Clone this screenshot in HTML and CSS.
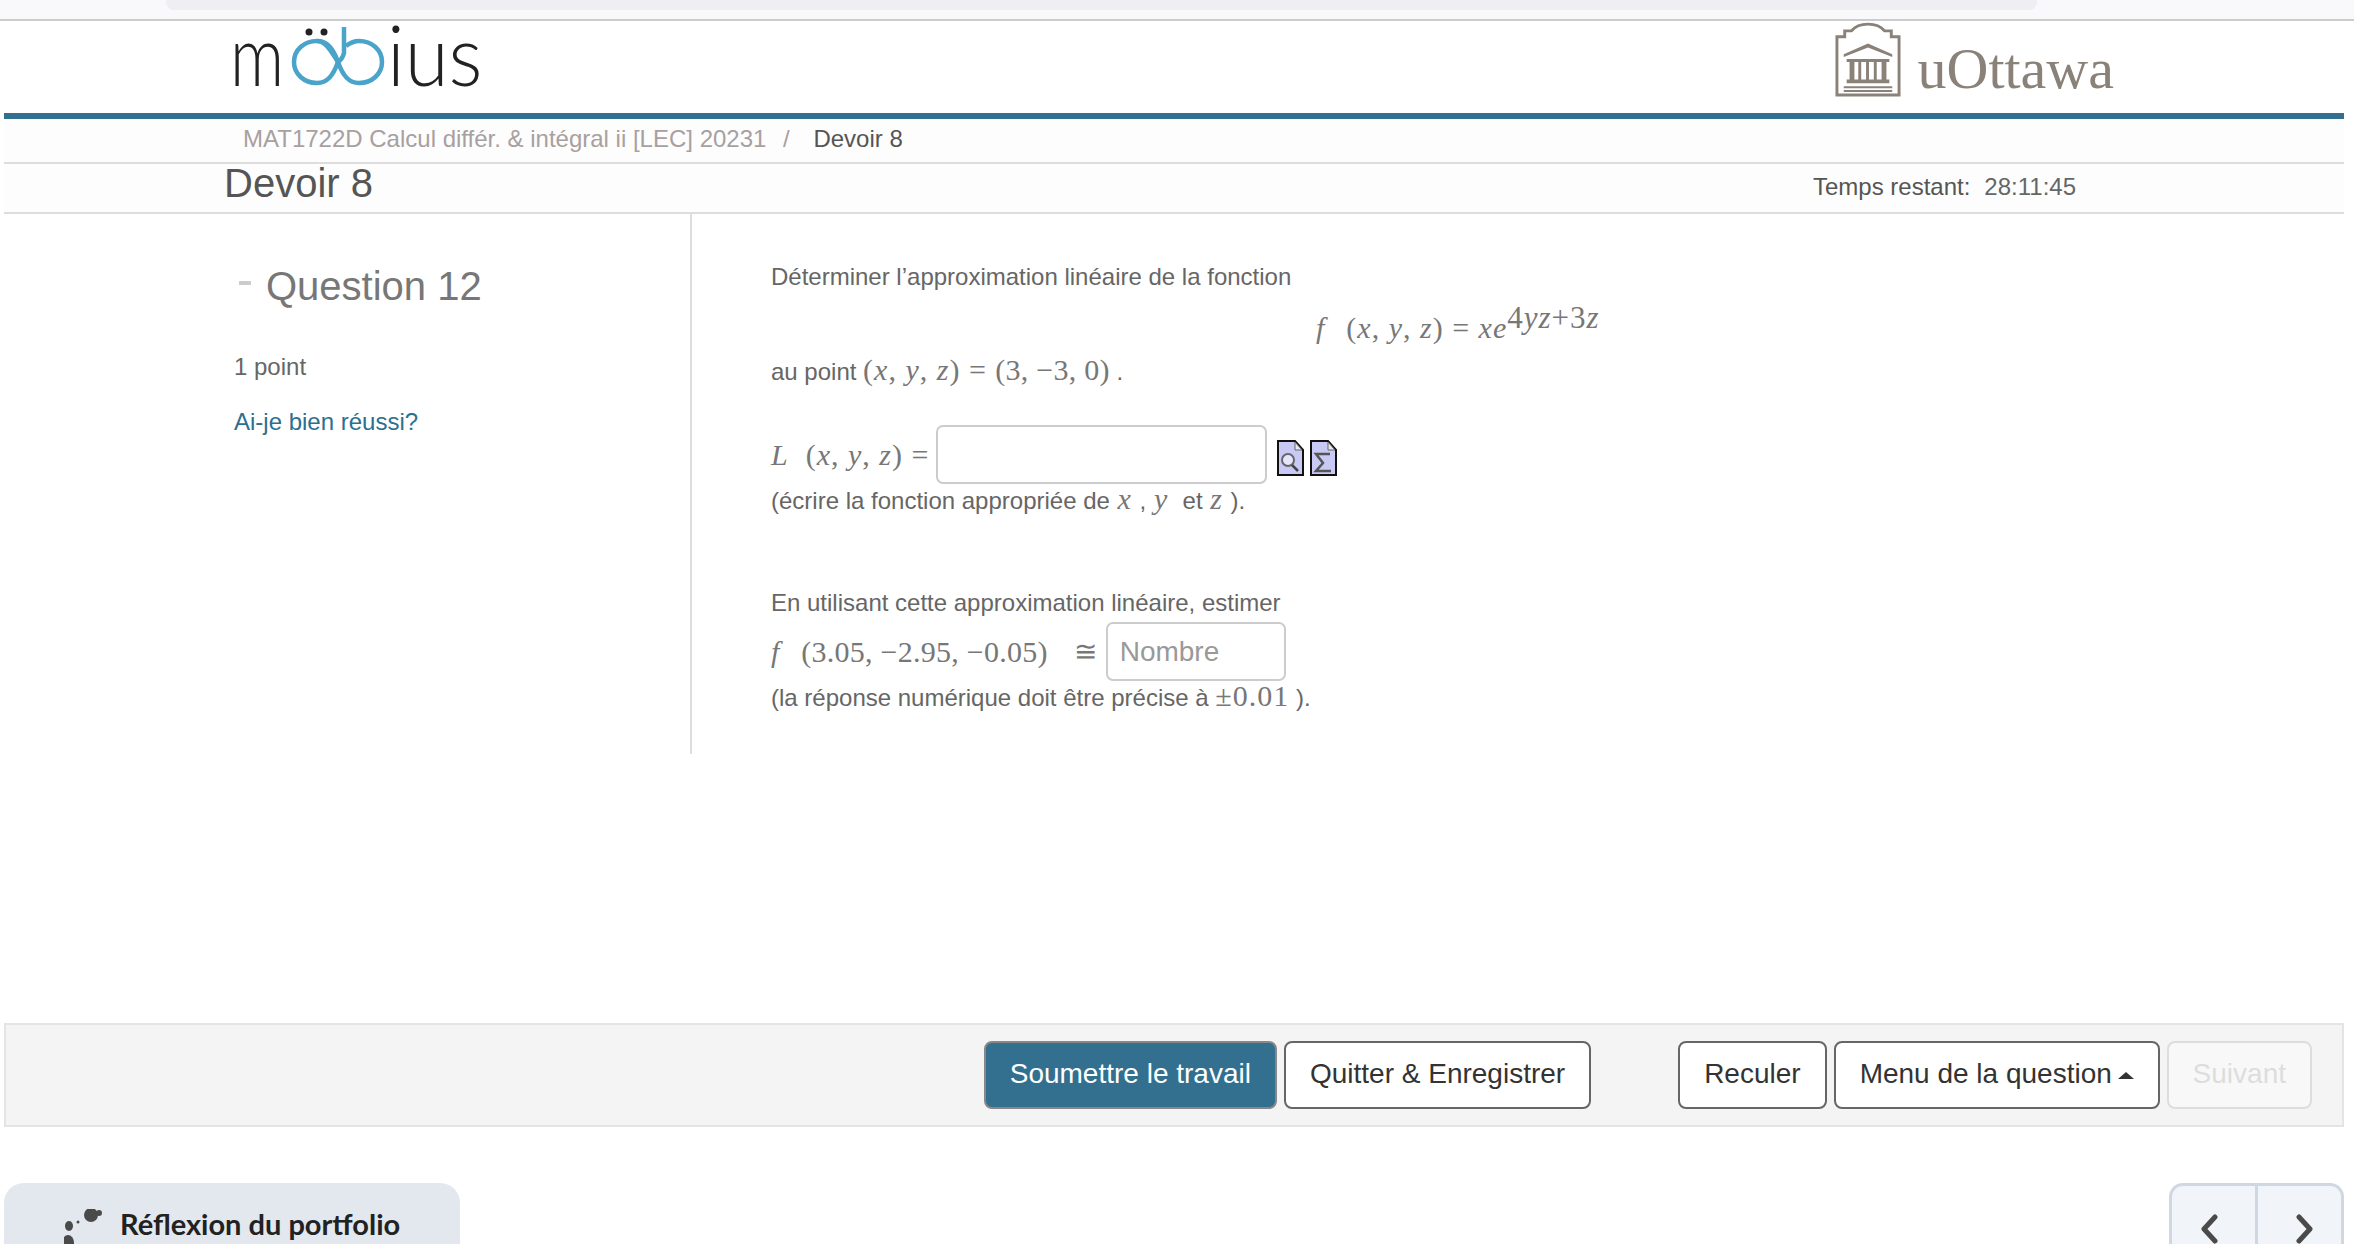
FILE: index.html
```html
<!DOCTYPE html>
<html lang="fr">
<head>
	<meta charset="UTF-8">
	<title>Devoir 8</title>
	<link rel="stylesheet" href="styles.css">
</head>
<body>
	<div class="chrome"><div class="chrome_pill"></div></div>

	<div class="page">
		<div class="header">
			<div class="logo_mobius">
				<span class="logo_m">m</span>
				<svg class="logo_loop" width="98" height="62" viewBox="0 0 98 62">
					<path d="M27 58c-13 0-23-9-23-21s10-21 23-21c10 0 16 7 21 21s11 21 21 21c13 0 23-9 23-21s-10-21-23-21c-5 0-9 2-13 5M48 37c-5 14-11 21-21 21" fill="none" stroke="#4aa3c8" stroke-width="4.5"/>
					<path d="M48 37C40 24 35 16 27 16" fill="none" stroke="#4aa3c8" stroke-width="4.5"/>
					<path d="M54 2v26c-1 4-3 7-6 9" fill="none" stroke="#4aa3c8" stroke-width="4.5"/>
					<circle cx="19" cy="7" r="3.5" fill="#222"/>
					<circle cx="34" cy="7" r="3.5" fill="#222"/>
				</svg>
				<span class="logo_ius">ius</span>
			</div>
			<div class="logo_ottawa">
				<svg width="66" height="78" viewBox="0 0 68 78">
					<path d="M2 75V15h8V9h7C21 4 27 2 34 2s13 2 17 7h7v6h8v60z" fill="none" stroke="#8a8178" stroke-width="3"/>
					<path d="M9 33l25-11 25 11v3L34 26 9 36z" fill="#8a8178"/>
					<path d="M12 38h44v3H12zM15 41h5v18h-5zM24 41h3v18h-3zM32 41h3v18h-3zM40 41h3v18h-3zM48 41h5v18h-5zM12 59h44v4H12zM9 66h50v2H9zM9 70h50v2H9z" fill="#8a8178"/>
				</svg>
				<span class="logo_ottawa_txt">uOttawa</span>
			</div>
		</div>

		<div class="breadcrumb">
			<span class="crumb_course">MAT1722D Calcul différ. &amp; intégral ii [LEC] 20231</span>
			<span class="crumb_sep">/</span>
			<span class="crumb_cur">Devoir 8</span>
		</div>

		<div class="titlebar">
			<h1 class="title">Devoir 8</h1>
			<div class="timer"><span>Temps restant:</span><span class="timer_val">28:11:45</span></div>
		</div>

		<div class="content">
			<div class="side">
				<h2 class="q_title"><span class="q_dash"></span>Question 12</h2>
				<p class="q_points">1 point</p>
				<a class="q_link" href="#">Ai-je bien réussi?</a>
			</div>
			<div class="question">
				<p class="line_intro">Déterminer l’approximation linéaire de la fonction</p>
				<p class="line_formula"><span class="math"><i class="fn">f</i> &nbsp;(<i>x</i>, <i>y</i>, <i>z</i>) = <i>xe</i><sup>4<i>yz</i>+3<i>z</i></sup></span></p>
				<p class="line_point">au point <span class="math">(<i>x</i>, <i>y</i>, <i>z</i>) = <span class="math_num">(3, −3, 0)</span></span> .</p>
				<div class="line_answer">
					<span class="math"><i>L</i> &nbsp;(<i>x</i>, <i>y</i>, <i>z</i>) =</span>
					<input type="text" class="ans_input ans_wide">
					<svg class="ans_icon" width="27" height="36" viewBox="0 0 27 36">
						<path d="M1 1h17l8 9v25H1z" fill="#c9c9f5" stroke="#111" stroke-width="2"/>
						<path d="M18 2v8h7z" fill="#e8e8f0" stroke="#666"/>
						<circle cx="11" cy="20" r="6" fill="#e6e6fa" stroke="#666" stroke-width="2"/>
						<path d="M15 25l6 6" stroke="#444" stroke-width="2.5"/>
					</svg>
					<svg class="ans_icon" width="27" height="36" viewBox="0 0 27 36">
						<path d="M1 1h17l8 9v25H1z" fill="#c9c9f5" stroke="#111" stroke-width="2"/>
						<path d="M18 2v8h7z" fill="#e8e8f0" stroke="#666"/>
						<path d="M20 14H6l7 9-7 8h15" fill="none" stroke="#555" stroke-width="2.5"/>
					</svg>
				</div>
				<p class="line_note">(écrire la fonction appropriée de <span class="math"><i>x</i></span> , <span class="math"><i>y</i></span> &nbsp;et <span class="math"><i>z</i></span> ).</p>
				<p class="line_estim">En utilisant cette approximation linéaire, estimer</p>
				<div class="line_answer2">
					<span class="math"><i class="fn">f</i> &nbsp;<span class="math_num">(3.05, −2.95, −0.05)</span></span>
					<span class="math approx">≅</span>
					<input type="text" class="ans_input ans_num" placeholder="Nombre">
				</div>
				<p class="line_note2">(la réponse numérique doit être précise à <span class="math">±0.01</span> ).</p>
			</div>
		</div>

		<div class="actions">
			<button class="btn btn_main">Soumettre le travail</button>
			<button class="btn">Quitter &amp; Enregistrer</button>
			<button class="btn btn_back">Reculer</button>
			<button class="btn">Menu de la question <span class="caret"></span></button>
			<button class="btn btn_off">Suivant</button>
		</div>

		<div class="bottom">
			<div class="folio">
				<svg width="38" height="40" viewBox="0 0 38 40">
					<circle cx="27" cy="6" r="7" fill="#4a4a4a"/>
					<circle cx="35" cy="4" r="3" fill="#4a4a4a"/>
					<circle cx="14" cy="13" r="1.5" fill="#4a4a4a"/>
					<ellipse cx="5" cy="17" rx="4" ry="5" fill="#4a4a4a"/>
					<ellipse cx="4" cy="34" rx="6" ry="8" fill="#4a4a4a"/>
				</svg>
				<span>Réflexion du portfolio</span>
			</div>
			<div class="pager">
				<div class="pager_btn">
					<svg width="20" height="30" viewBox="0 0 20 30"><path d="M16 3L5 15l11 12" fill="none" stroke="#4a4a4a" stroke-width="5" stroke-linecap="round" stroke-linejoin="round"/></svg>
				</div>
				<div class="pager_btn pager_next">
					<svg width="20" height="30" viewBox="0 0 20 30"><path d="M4 3l11 12L4 27" fill="none" stroke="#4a4a4a" stroke-width="5" stroke-linecap="round" stroke-linejoin="round"/></svg>
				</div>
			</div>
		</div>
	</div>
</body>
</html>
```

FILE: styles.css
```css
html, body
{
	margin: 0;
	height: 1244px;
	overflow: hidden;
	background-color: #fff;
	font-family: "Liberation Sans", Arial, sans-serif;
	font-size: 24px;
	color: #666;
}
p, h1, h2
{
	margin: 0;
	font-weight: normal;
}
.chrome
{
	height: 19px;
	background-color: #f9f9fb;
	border-bottom: 2px solid #ccc;
	padding: 0 317px 0 166px;
}
.chrome_pill
{
	height: 10px;
	background-color: #eeeef3;
	border-radius: 0 0 8px 8px;
}
.page
{
	margin: 0 10px 0 4px;
}
.header
{
	height: 92px;
	display: flex;
	justify-content: space-between;
	border-bottom: 6px solid #33708f;
}
.logo_mobius
{
	display: flex;
	align-items: flex-end;
	height: 66px;
	padding-left: 226px;
	font-family: Lato, sans-serif;
	font-weight: 300;
	font-size: 84px;
	line-height: 66px;
	color: #222;
}
.logo_m, .logo_ius
{
	display: inline-block;
	transform-origin: left;
}
.logo_m
{
	transform: scaleX(.8);
	margin-right: -8px;
}
.logo_ius
{
	transform: scaleX(.95);
	margin: 0 -5px 0 -1px;
}
.logo_ottawa
{
	display: flex;
	padding-right: 230px;
	gap: 17px;
}
.logo_ottawa_txt
{
	font-family: "Liberation Serif", serif;
	font-size: 58px;
	line-height: 96px;
	color: #8a8178;
}
.breadcrumb
{
	height: 43px;
	line-height: 40px;
	padding-left: 239px;
	background-color: #fdfdfd;
	border-bottom: 2px solid #ddd;
	color: #a8a0a0;
}
.crumb_sep
{
	margin: 0 17px 0 10px;
}
.crumb_cur
{
	color: #555;
}
.titlebar
{
	height: 48px;
	display: flex;
	justify-content: space-between;
	background-color: #fdfdfd;
	border-bottom: 2px solid #ddd;
}
.title
{
	margin-left: 220px;
	font-size: 40px;
	line-height: 38px;
	color: #555;
}
.timer
{
	margin-right: 268px;
	display: flex;
	gap: 14px;
	line-height: 46px;
	color: #555;
}
.timer_val
{
	color: #666;
}
.content
{
	height: 540px;
	display: flex;
}
.side
{
	padding: 50px 0 0 230px;
	box-sizing: border-box;
	width: 688px;
	border-right: 2px solid #ddd;
}
.q_title
{
	display: flex;
	align-items: center;
	font-size: 40px;
	line-height: 44px;
	color: #777;
}
.q_dash
{
	width: 12px;
	height: 4px;
	background-color: #ccc;
	margin: 0 15px 0 5px;
	position: relative;
	top: -3px;
}
.q_points
{
	margin-top: 45px;
	line-height: 28px;
}
.q_link
{
	display: block;
	margin-top: 27px;
	line-height: 28px;
	color: #2b7091;
	text-decoration: none;
}
.question
{
	padding: 49px 0 0 79px;
	flex: 1;
}
.math
{
	font-family: "Liberation Serif", serif;
	font-size: 30px;
	color: #777;
	letter-spacing: 1px;
}
.math_num
{
	letter-spacing: .25px;
}
.fn
{
	margin-right: 4px;
}
.math sup
{
	font-size: 31px;
	line-height: 0;
	position: relative;
	top: 1px;
	vertical-align: super;
}
.line_intro
{
	line-height: 28px;
}
.line_formula
{
	margin-top: 19px;
	padding-left: 545px;
	line-height: 36px;
}
.line_point
{
	margin-top: 3px;
	line-height: 38px;
}
.line_answer
{
	margin-top: 34px;
	display: flex;
	align-items: center;
	height: 59px;
}
.ans_input
{
	box-sizing: border-box;
	height: 59px;
	background-color: #fff;
	border: 2px solid #ccc;
	border-radius: 7px;
	font-family: "Liberation Sans", Arial, sans-serif;
	font-size: 28px;
	padding: 0 12px;
}
.ans_input::placeholder
{
	color: #999;
}
.ans_wide
{
	width: 331px;
	margin-left: 7px;
}
.ans_icon
{
	margin-top: 7px;
	margin-left: 10px;
}
.ans_icon + .ans_icon
{
	margin-left: 6px;
}
.line_note
{
	margin-top: 0;
	line-height: 30px;
}
.line_note .math
{
	padding: 0 1px;
}
.line_estim
{
	margin-top: 73px;
	line-height: 28px;
}
.line_answer2
{
	margin-top: 5px;
	display: flex;
	align-items: center;
	height: 59px;
}
.approx
{
	margin-left: 26px;
	font-size: 28px;
}
.ans_num
{
	width: 180px;
	margin-left: 8px;
}
.line_note2
{
	margin-top: 0;
	line-height: 30px;
}
.actions
{
	margin-top: 269px;
	height: 68px;
	padding: 16px 30px 16px 0;
	display: flex;
	justify-content: flex-end;
	gap: 7px;
	background-color: #f4f4f4;
	border: 2px solid #e4e4e4;
}
.btn
{
	height: 68px;
	padding: 0 24px 2px;
	font-family: "Liberation Sans", Arial, sans-serif;
	font-size: 28px;
	color: #333;
	background-color: #fff;
	border: 2px solid #666;
	border-radius: 8px;
}
.btn_main
{
	color: #fff;
	background-color: #33708f;
	border-color: #888;
}
.btn_back
{
	margin-left: 80px;
}
.btn_off
{
	color: #ddd;
	background-color: #f8f8f8;
	border-color: #ddd;
}
.caret
{
	display: inline-block;
	margin-left: -2px;
	border: 8px solid transparent;
	border-top: 0;
	border-bottom: 7px solid #333;
	vertical-align: 4px;
}
.bottom
{
	margin-top: 56px;
	height: 70px;
	display: flex;
	justify-content: space-between;
}
.folio
{
	width: 456px;
	height: 70px;
	box-sizing: border-box;
	padding: 26px 0 0 60px;
	display: flex;
	align-items: flex-start;
	gap: 18px;
	background-color: #e3e8ef;
	border-radius: 20px 20px 0 0;
	font-family: Lato, sans-serif;
	font-weight: 700;
	font-size: 29px;
	line-height: 30px;
	color: #222;
}
.pager
{
	display: flex;
	width: 175px;
	height: 70px;
	box-sizing: border-box;
	background-color: #f1f4f9;
	border: 3px solid #cfd8e0;
	border-bottom: 0;
	border-radius: 14px 14px 0 0;
}
.pager_btn
{
	flex: 1;
	display: flex;
	justify-content: center;
	padding: 28px 10px 0 0;
}
.pager_next
{
	padding: 28px 0 0 10px;
	border-left: 3px solid #cfd8e0;
}
```
